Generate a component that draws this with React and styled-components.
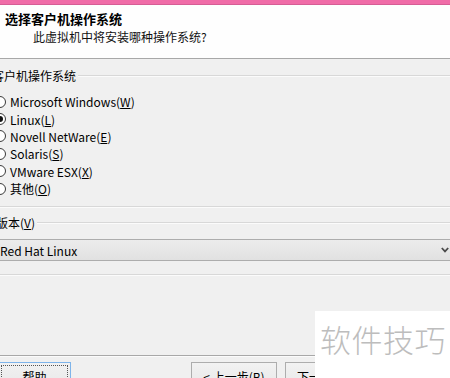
import styled, { createGlobalStyle } from "styled-components";

const GlobalStyle = createGlobalStyle`
  html, body {
    margin: 0;
    padding: 0;
    width: 450px;
    height: 378px;
    overflow: hidden;
    background: #f0f0f0;
  }
  body {
    font-family: "Noto Sans CJK SC", "Noto Sans", sans-serif;
    font-size: 12px;
    color: #000;
  }
`;

const Page = styled.div`
  position: relative;
  width: 450px;
  height: 399px;
  display: flex;
  flex-direction: column;
`;

const TitleStrip = styled.div`
  height: 4px;
  background: #f06ca8;
  border-bottom: 1px solid #d65d95;
  flex-shrink: 0;
`;

const Header = styled.div`
  height: 48px;
  padding: 5px 0 0 5px;
  background: #fefefe;
  border-bottom: 1px solid #a8a8a8;
  flex-shrink: 0;
`;

const Title = styled.div`
  font-weight: bold;
  font-size: 13px;
  line-height: 18px;
`;

const Subtitle = styled.div`
  font-size: 12px;
  line-height: 18px;
  margin-left: 28px;
  color: #111;
`;

const Body = styled.div`
  flex: 1;
  margin-left: -14px;
  margin-right: -20px;
  padding-top: 9px;
`;

const GroupHead = styled.div`
  display: flex;
  align-items: center;
  height: 16px;
  margin-top: ${(p) => p.$top || 0}px;
  padding-left: ${(p) => p.$indent || 6}px;
`;

const GroupLabel = styled.span`
  line-height: 16px;
  padding-right: 2px;
  white-space: nowrap;
`;

const GroupLine = styled.div`
  flex: 1;
  height: 0;
  border-top: 1px solid #d8d8d8;
  border-bottom: 1px solid #fbfbfb;
`;

const GroupEnd = styled.div`
  height: 0;
  border-top: 1px solid #d8d8d8;
  border-bottom: 1px solid #fbfbfb;
  margin-top: ${(p) => p.$top || 0}px;
`;

const RadioList = styled.div`
  margin-top: 9px;
  display: flex;
  flex-direction: column;
`;

const RadioRow = styled.label`
  display: flex;
  align-items: center;
  height: 17.4px;
  padding-left: 8px;
  gap: 4px;
`;

const RadioDot = styled.span`
  position: relative;
  width: 10px;
  height: 10px;
  border: 1px solid #3a3a3a;
  border-radius: 50%;
  background: #fff;
  flex-shrink: 0;
  &::after {
    content: "";
    display: ${(p) => (p.$checked ? "block" : "none")};
    position: absolute;
    left: 2px;
    top: 2px;
    width: 6px;
    height: 6px;
    border-radius: 50%;
    background: #111;
  }
`;

const Key = styled.u`
  text-underline-offset: 1px;
`;

const Select = styled.div`
  margin-top: 8px;
  height: 20px;
  display: flex;
  align-items: center;
  justify-content: space-between;
  padding: 0 21px 0 14px;
  background: linear-gradient(#ececec, #e1e1e1);
  border-top: 1px solid #adadad;
  border-bottom: 1px solid #adadad;
`;

const Footer = styled.div`
  box-sizing: border-box;
  height: 44px;
  flex-shrink: 0;
  border-top: 1px solid #a8a8a8;
  box-shadow: inset 0 1px 0 #fbfbfb;
  display: flex;
  align-items: flex-start;
  padding-top: 6px;
  margin-left: -2px;
`;

const Button = styled.button`
  box-sizing: border-box;
  font-family: inherit;
  font-size: 12px;
  height: 30px;
  padding: 6px 0 0;
  width: ${(p) => p.$w}px;
  margin-left: ${(p) => p.$left || 0}px;
  background: linear-gradient(#f2f2f2, #e6e6e6);
  border: 1px solid ${(p) => (p.$focus ? "#7eb4ea" : "#adadad")};
  outline: ${(p) => (p.$focus ? "1px dotted #555" : "none")};
  outline-offset: -4px;
  color: #000;
  line-height: 16px;
  display: flex;
  align-items: flex-start;
  justify-content: center;
`;

const Watermark = styled.div`
  position: absolute;
  left: 315px;
  top: 311px;
  width: 135px;
  height: 67px;
  background: #fff;
  color: #bdbdbd;
  font-size: 31px;
  font-weight: 300;
  line-height: 40px;
  padding: 8px 0 0 5px;
  box-sizing: border-box;
  letter-spacing: 0.5px;
`;

const systems = [
  { name: "Microsoft Windows", key: "W" },
  { name: "Linux", key: "L", checked: true },
  { name: "Novell NetWare", key: "E" },
  { name: "Solaris", key: "S" },
  { name: "VMware ESX", key: "X" },
  { name: "其他", key: "O" },
];

function Chevron() {
  return (
    <svg width="8" height="6" viewBox="0 0 8 6">
      <path d="M0.8 1 L4 4.4 L7.2 1" fill="none" stroke="#4a4a4a" strokeWidth="1.8" />
    </svg>
  );
}

export default function App() {
  return (
    <>
      <GlobalStyle />
      <Page>
        <TitleStrip />
        <Header>
          <Title>选择客户机操作系统</Title>
          <Subtitle>此虚拟机中将安装哪种操作系统?</Subtitle>
        </Header>
        <Body>
          <GroupHead $indent={6}>
            <GroupLabel>客户机操作系统</GroupLabel>
            <GroupLine />
          </GroupHead>
          <RadioList>
            {systems.map((s) => (
              <RadioRow key={s.key}>
                <RadioDot $checked={s.checked} />
                <span>
                  {s.name}(<Key>{s.key}</Key>)
                </span>
              </RadioRow>
            ))}
          </RadioList>
          <GroupEnd $top={9} />
          <GroupHead $top={7} $indent={10}>
            <GroupLabel>
              版本(<Key>V</Key>)
            </GroupLabel>
            <GroupLine />
          </GroupHead>
          <Select>
            <span>Red Hat Linux</span>
            <Chevron />
          </Select>
          <GroupEnd $top={13} />
        </Body>
        <Footer>
          <Button $w={73} $focus>
            帮助
          </Button>
          <Button $w={86} $left={120}>
            &lt; 上一步(<Key>B</Key>)
          </Button>
          <Button $w={86} $left={8}>
            下一步(<Key>N</Key>) &gt;
          </Button>
        </Footer>
        <Watermark>软件技巧</Watermark>
      </Page>
    </>
  );
}
